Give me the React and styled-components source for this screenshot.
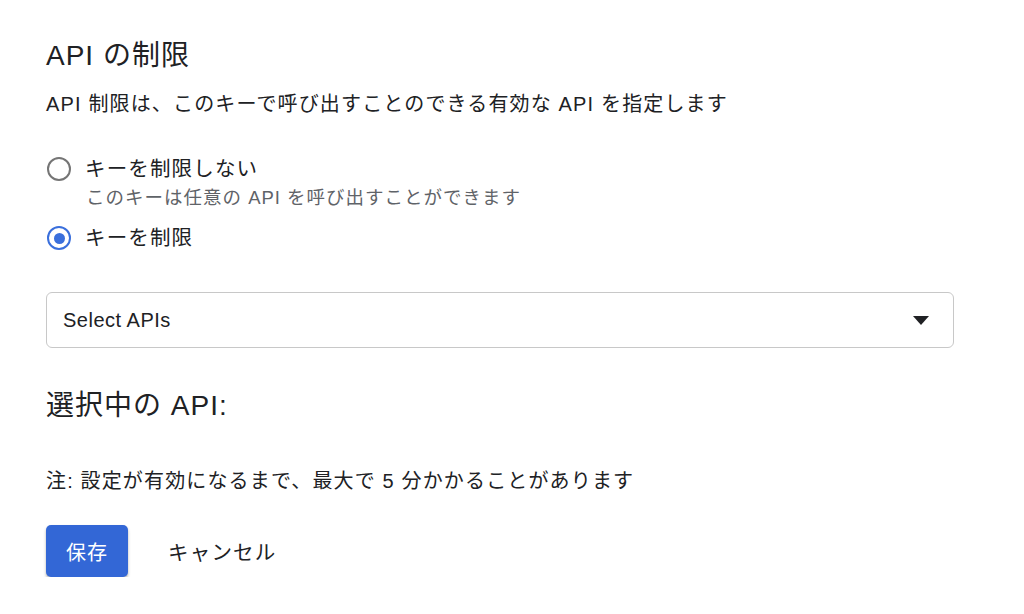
import React, { useState } from "react";
import styled, { createGlobalStyle } from "styled-components";

const GlobalStyle = createGlobalStyle`
  body {
    margin: 0;
    background: #fff;
    font-family: "Liberation Sans", "Noto Sans CJK JP", sans-serif;
    color: #202124;
  }
`;

export default function App() {
  const [mode, setMode] = useState("restrict");

  return (
    <Page>
      <GlobalStyle />
      <Title>API の制限</Title>
      <Description>API 制限は、このキーで呼び出すことのできる有効な API を指定します</Description>

      <RadioRow top={39} onClick={() => setMode("none")}>
        <Radio checked={mode === "none"} />
        <RadioLabel>キーを制限しない</RadioLabel>
      </RadioRow>
      <Hint>このキーは任意の API を呼び出すことができます</Hint>
      <RadioRow top={16} onClick={() => setMode("restrict")}>
        <Radio checked={mode === "restrict"} />
        <RadioLabel>キーを制限</RadioLabel>
      </RadioRow>

      <Select>
        <span>Select APIs</span>
        <svg width="16" height="9" viewBox="0 0 16 9">
          <path d="M0 0 L16 0 L8 9 Z" fill="#202124" />
        </svg>
      </Select>

      <Subtitle>選択中の API:</Subtitle>
      <Note>注: 設定が有効になるまで、最大で 5 分かかることがあります</Note>

      <Actions>
        <PrimaryButton>保存</PrimaryButton>
        <TextButton>キャンセル</TextButton>
      </Actions>
    </Page>
  );
}

const Page = styled.div`
  display: flex;
  flex-direction: column;
  align-items: flex-start;
  padding: 38px 0 0 46px;
  width: 908px;
  letter-spacing: 1.15px;
`;
const Title = styled.h1`
  margin: 0;
  font-size: 28px;
  line-height: 36px;
  font-weight: 400;
  letter-spacing: 1px;
`;
const Description = styled.div`
  margin-top: 18px;
  font-size: 20px;
  line-height: 24px;
`;
const RadioRow = styled.label`
  display: flex;
  align-items: center;
  gap: 14px;
  height: 28px;
  margin-top: ${(p) => p.top}px;
  cursor: pointer;
`;
const Radio = styled.span`
  box-sizing: border-box;
  width: 24px;
  height: 24px;
  margin-left: 1px;
  border-radius: 50%;
  border: 2.5px solid ${(p) => (p.checked ? "#3a6fdc" : "#757575")};
  display: flex;
  align-items: center;
  justify-content: center;
  &::after {
    content: "";
    width: 11px;
    height: 11px;
    border-radius: 50%;
    background: #3a6fdc;
    display: ${(p) => (p.checked ? "block" : "none")};
  }
`;
const RadioLabel = styled.span`
  font-size: 20.5px;
  line-height: 24px;
`;
const Hint = styled.div`
  margin: 5px 0 0 40px;
  font-size: 18.5px;
  line-height: 20px;
  letter-spacing: 1px;
  color: #5f6368;
`;
const Select = styled.div`
  box-sizing: border-box;
  margin-top: 40px;
  width: 908px;
  height: 56px;
  border: 1px solid #c8c8c8;
  border-radius: 6px;
  display: flex;
  align-items: center;
  justify-content: space-between;
  padding: 0 24px 0 16px;
  font-size: 20px;
  letter-spacing: 0.5px;
`;
const Subtitle = styled.h2`
  margin: 40px 0 0;
  font-size: 28px;
  line-height: 36px;
  font-weight: 400;
  letter-spacing: 1px;
`;
const Note = styled.div`
  margin-top: 45px;
  font-size: 20px;
  line-height: 24px;
`;
const Actions = styled.div`
  margin-top: 32px;
  display: flex;
  align-items: center;
  gap: 40px;
`;
const PrimaryButton = styled.button`
  width: 82px;
  height: 52px;
  border: none;
  border-radius: 5px;
  background: #3367d6;
  color: #fff;
  font-family: inherit;
  font-size: 20px;
  letter-spacing: 1px;
  box-shadow: 0 2px 3px rgba(0, 0, 0, 0.3);
`;
const TextButton = styled.button`
  border: none;
  background: none;
  padding: 0;
  color: #202124;
  font-family: inherit;
  font-size: 20.5px;
  letter-spacing: 1.2px;
`;
